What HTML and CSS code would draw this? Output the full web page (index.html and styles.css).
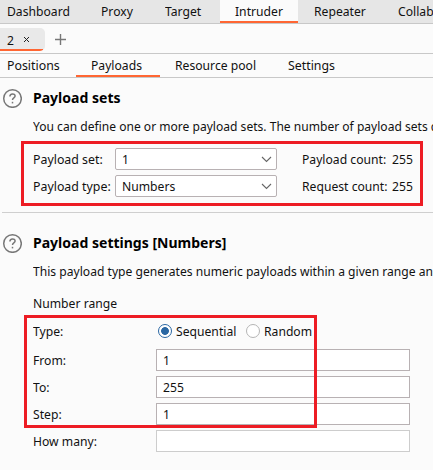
FILE: index.html
```html
<!DOCTYPE html>
<html lang="en">
<head>
<meta charset="utf-8">
<title>Intruder - Payloads</title>
<link rel="stylesheet" href="styles.css">
</head>
<body>
<nav class="tools">
  <div class="tool dashboard"><span>Dashboard</span></div>
  <div class="tool proxy"><span>Proxy</span></div>
  <div class="tool target"><span>Target</span></div>
  <div class="tool intruder active"><span>Intruder</span></div>
  <div class="tool repeater"><span>Repeater</span></div>
  <div class="tool"><span>Collaborator</span></div>
</nav>
<div class="attacks">
  <div class="attack"><span>2</span><svg class="close" width="7" height="7" viewBox="0 0 7 7"><path d="M1 1l5 5M6 1l-5 5"/></svg></div>
  <svg class="plus" width="11" height="11" viewBox="0 0 11 11"><path d="M5.5 0v11M0 5.5h11"/></svg>
</div>
<nav class="views">
  <div class="view positions"><span>Positions</span></div>
  <div class="view payloads active"><span>Payloads</span></div>
  <div class="view pool"><span>Resource pool</span></div>
  <div class="view"><span>Settings</span></div>
</nav>
<main>
  <section class="sets">
    <div class="heading">
      <svg class="help" width="20" height="20" viewBox="0 0 20 20"><circle cx="10.5" cy="10.5" r="8.8"/><path d="M7.9 8.6c0-3.5 5.2-3.3 5.2-.6 0 1.9-2.6 1.9-2.6 3.9"/><path d="M10.5 13.8v1.6"/></svg>
      <h2><span>Payload sets</span></h2>
    </div>
    <p class="desc"><span>You can define one or more payload sets. The number of payload sets depends on the attack type</span></p>
    <div class="set-grid">
      <label><span>Payload set:</span></label>
      <div class="combo"><span>1</span><svg width="11" height="7" viewBox="0 0 11 7"><path d="M1 1l4.5 4.5L10 1"/></svg></div>
      <span>Payload count:</span><span>255</span>
      <label><span>Payload type:</span></label>
      <div class="combo"><span>Numbers</span><svg width="11" height="7" viewBox="0 0 11 7"><path d="M1 1l4.5 4.5L10 1"/></svg></div>
      <span>Request count:</span><span>255</span>
    </div>
    <div class="mark mark-sets"></div>
  </section>
  <section class="settings">
    <div class="heading">
      <svg class="help" width="20" height="20" viewBox="0 0 20 20"><circle cx="10.5" cy="10.5" r="8.8"/><path d="M7.9 8.6c0-3.5 5.2-3.3 5.2-.6 0 1.9-2.6 1.9-2.6 3.9"/><path d="M10.5 13.8v1.6"/></svg>
      <h2><span>Payload settings [Numbers]</span></h2>
    </div>
    <p class="desc"><span>This payload type generates numeric payloads within a given range and in a specified format.</span></p>
    <p class="group"><span>Number range</span></p>
    <div class="range-grid">
      <label><span>Type:</span></label>
      <div class="radios">
        <i class="radio on"></i><span class="seq">Sequential</span>
        <i class="radio"></i><span>Random</span>
      </div>
      <label><span>From:</span></label><div class="field"><span>1</span></div>
      <label><span>To:</span></label><div class="field"><span>255</span></div>
      <label><span>Step:</span></label><div class="field"><span>1</span></div>
      <label><span>How many:</span></label><div class="field disabled"></div>
    </div>
    <div class="mark mark-range"></div>
  </section>
</main>
</body>
</html>
```
FILE: styles.css
```css
* { box-sizing: border-box; }
body {
  margin: 0;
  width: 433px;
  height: 470px;
  overflow: hidden;
  background: #fbfbfb;
  color: #111;
  font: 13px/18px "Noto Sans", sans-serif;
  white-space: nowrap;
}
h2, p { margin: 0; }
svg { display: block; flex: none; fill: none; }
/* slightly condensed interface type */
span { display: inline-block; transform: scaleX(.935); transform-origin: 0 50%; }

.tools, .views { display: flex; height: 24px; border-bottom: 1px solid #c8c8c8; overflow: hidden; }
.tools { background: #e6e6e6; }
.tool, .view { flex: none; height: 23px; line-height: 23px; }
.tool { padding-left: 16px; }
.active { border-bottom: 2px solid #ff6633; }
.dashboard { width: 85px; padding-left: 7px; }
.proxy { width: 64px; }
.target { width: 71px; }
.intruder { width: 78px; background: #fbfbfb; padding-left: 15px; }
.repeater { width: 84px; }

.attacks { display: flex; align-items: flex-start; height: 30px; padding-top: 4px; border-bottom: 1px solid #c8c8c8; }
.attack {
  display: flex;
  align-items: center;
  width: 45px;
  height: 23px;
  padding-left: 7px;
  gap: 9px;
  background: linear-gradient(#ff6633, #ff6633) 0 100% / 43px 2px no-repeat #e9e9e9;
  border-radius: 0 5px 5px 0;
}
.close { stroke: #222; stroke-width: 1; }
.plus { margin: 6px 0 0 10px; stroke: #777; stroke-width: 1.4; }

.positions { width: 76px; padding-left: 7px; }
.payloads { width: 84px; padding-left: 15px; }
.pool { width: 113px; padding-left: 15px; }
.view:last-child { padding-left: 15px; }
.positions span, .view:last-child span { transform: scaleX(.95); }

section { position: relative; padding-left: 2px; }
.sets { height: 135px; padding-top: 10px; }
.sets::after { content: ""; position: absolute; left: 2px; right: 0; bottom: 0; height: 1px; background: #cfcfcf; }
.heading { display: flex; align-items: center; height: 20px; gap: 11px; }
.help { stroke: #777; stroke-width: 1.5; }
h2 { color: #000; font-size: 15px; line-height: 20px; position: relative; top: -1px; }
.desc { height: 18px; margin: 9px 0 0 31px; }
.sets .desc span { transform: scaleX(.928); }
.settings .desc span { transform: scaleX(.931); }

.set-grid {
  display: grid;
  grid-template-columns: 82px 187px 90px auto;
  grid-template-rows: 22px 22px;
  row-gap: 5px;
  align-items: center;
  margin: 13px 0 0 31px;
}
.set-grid label span { transform: scaleX(.95); }
.combo {
  display: flex;
  align-items: center;
  justify-content: space-between;
  width: 162px;
  height: 22px;
  padding: 0 4px 0 6px;
  background: #fff;
  border: 1px solid #b8b1b3;
  border-radius: 2px;
}
.combo svg { stroke: #666; stroke-width: 1.1; }

.settings { padding-top: 20px; }
.group { height: 18px; margin: 14px 0 0 31px; }
.range-grid {
  display: grid;
  grid-template-columns: 123px 254px;
  grid-template-rows: 22px;
  grid-auto-rows: 22px;
  row-gap: 5px;
  align-items: center;
  margin: 10px 0 0 31px;
}
.range-grid > :nth-child(-n+2) { position: relative; top: -2px; }
.field { height: 22px; padding-left: 6px; line-height: 20px; background: #fff; border: 1px solid #b8b1b3; }
.disabled { border-color: #cdcdcd; }
.radios { display: flex; align-items: center; padding-left: 2px; }
.radio { flex: none; width: 14px; height: 14px; margin-right: 4px; border: 1px solid #b5b5b5; border-radius: 50%; background: #fff; }
.radio.on { border: 1.5px solid #2a67a3; background: radial-gradient(circle, #2a67a3 3.5px, #fff 4.3px); }
.seq { width: 70px; }

.mark { position: absolute; z-index: 1; border: 3px solid #ed1c24; }
.mark-sets { left: 21px; top: 63px; width: 402px; height: 65px; }
.mark-range { left: 24px; top: 102px; width: 293px; height: 113px; }
```
